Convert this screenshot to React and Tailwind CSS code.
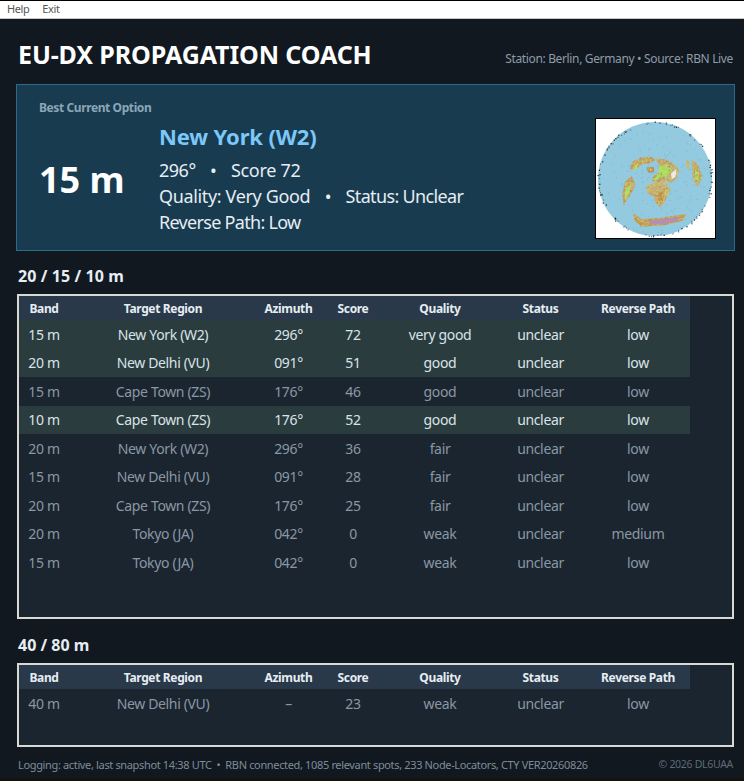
const rows1 = [
  ["15 m", "New York (W2)", "296°", "72", "very good", "unclear", "low", true],
  ["20 m", "New Delhi (VU)", "091°", "51", "good", "unclear", "low", true],
  ["15 m", "Cape Town (ZS)", "176°", "46", "good", "unclear", "low", false],
  ["10 m", "Cape Town (ZS)", "176°", "52", "good", "unclear", "low", true],
  ["20 m", "New York (W2)", "296°", "36", "fair", "unclear", "low", false],
  ["15 m", "New Delhi (VU)", "091°", "28", "fair", "unclear", "low", false],
  ["20 m", "Cape Town (ZS)", "176°", "25", "fair", "unclear", "low", false],
  ["20 m", "Tokyo (JA)", "042°", "0", "weak", "unclear", "medium", false],
  ["15 m", "Tokyo (JA)", "042°", "0", "weak", "unclear", "low", false],
];
const rows2 = [["40 m", "New Delhi (VU)", "–", "23", "weak", "unclear", "low", false]];
const headers = ["Band", "Target Region", "Azimuth", "Score", "Quality", "Status", "Reverse Path"];

// seeded random so the globe looks the same on every run
function rng(seed) {
  let s = seed;
  return () => {
    s = (s * 16807) % 2147483647;
    return s / 2147483647;
  };
}

function speckle(count, seed, minR, maxR) {
  const next = rng(seed);
  const out = [];
  for (let i = 0; i < count; i++) {
    const a = next() * Math.PI * 2;
    const r = minR + next() * (maxR - minR);
    out.push([210 + Math.cos(a) * r, 205 + Math.sin(a) * r]);
  }
  return out;
}

const land = [
  "M134 176 L144 152 L168 141 L198 138 L212 148 L194 158 L172 160 L152 176 Z",
  "M212 144 L242 146 L264 158 L282 176 L278 200 L260 216 L238 212 L214 218 L198 208 L212 190 L230 184 L222 166 Z",
  "M184 170 L206 168 L208 184 L190 186 Z",
  "M184 226 L206 218 L240 214 L258 238 L246 258 L238 278 L224 288 L212 278 L206 256 L186 246 Z",
  "M120 214 L140 196 L152 222 L140 246 L126 266 L116 286 L112 248 Z",
  "M320 148 L338 160 L352 198 L338 228 L324 206 Z",
  "M306 144 L313 154 L311 182 L303 164 Z",
  "M144 308 L170 326 L222 322 L304 310 L292 330 L240 343 L172 348 L150 332 Z",
];

function landTexture() {
  const next = rng(4242);
  const colors = ["#a6d86c", "#e2cf9a", "#b08048", "#bdf078", "#d4b070"];
  const out = [];
  for (let x = 111; x < 354; x += 4) {
    for (let y = 138; y < 350; y += 4) {
      if (next() < 0.5) out.push([x, y, colors[Math.floor(next() * colors.length)]]);
    }
  }
  return out;
}

function Globe() {
  return (
    <svg viewBox="33 25 357 357" className="w-[119px] h-[119px] shrink-0 bg-white outline outline-1 outline-black">
      <defs>
        <clipPath id="land">
          {land.map((d) => (
            <path key={d} d={d} />
          ))}
        </clipPath>
      </defs>
      <g className="blur-[0.3px]">
        <circle cx="210" cy="205" r="171" fill="#93cadf" />
        {speckle(170, 77, 20, 168).map(([x, y], i) => (
          <rect key={i} x={x} y={y} width="3" height="3" fill="#6d98a8" opacity="0.45" />
        ))}
        {speckle(110, 991, 166, 173).map(([x, y], i) => (
          <rect key={i} x={x} y={y} width="3.5" height="3.5" fill={i % 3 === 0 ? "#111" : "#5b7480"} />
        ))}
        {/* north america + eurasia band */}
        <path d={land[0]} fill="#c59a5c" />
        <path d={land[1]} fill="#c0a870" />
        <path d={land[2]} fill="#b98a5a" />
        <path d="M222 170 L244 160 L262 178 L246 196 L226 200 L212 210 L204 204 L222 190 Z" fill="#a8e05c" />
        <path d="M148 164 L158 160 L156 176 L148 178 Z" fill="#a8e05c" />
        {/* africa */}
        <path d={land[3]} fill="#c9ad72" />
        <path d="M222 244 L240 238 L236 262 L226 280 L218 262 Z" fill="#c98c46" />
        {/* south america */}
        <path d={land[4]} fill="#c49a62" />
        <path d="M122 232 L138 222 L134 246 L120 268 Z" fill="#a8e05c" />
        {/* right hand land */}
        <path d={land[5]} fill="#c7a86c" />
        <path d="M330 178 L342 186 L338 210 L330 200 Z" fill="#a8e05c" />
        <path d={land[6]} fill="#c7b070" />
        {/* antarctica */}
        <path d={land[7]} fill="#c9974f" />
        <g clipPath="url(#land)" opacity="0.65">
          {landTexture().map(([x, y, c], i) => (
            <rect key={i} x={x} y={y} width="4" height="4" fill={c} />
          ))}
        </g>
        <path d="M258 188 L274 176 L272 198 L260 206 Z" fill="#efe6ee" />
        <path d="M192 330 L232 324 L288 318 L276 332 L232 340 L196 342 Z" fill="#b48fb0" />
      </g>
    </svg>
  );
}

const gridCols = "grid grid-cols-[50px_188px_63px_66px_108px_93px_102px] w-[671px] pr-[1px]";

function BandTable({ rows, heightClass }) {
  return (
    <div className={`mx-[1px] border-2 border-[#d8d8d4] bg-[#1a2530] ${heightClass} overflow-hidden`}>
      <div className={`${gridCols} h-[24px] pt-[1px] bg-[#293949] items-center text-center text-[12px] font-bold text-[#e6edf3] tracking-[-0.35px]`}>
        {headers.map((h) => (
          <div key={h}>{h}</div>
        ))}
      </div>
      {rows.map((r, i) => (
        <div
          key={i}
          className={`${gridCols} h-[28.5px] items-center text-center text-[14px] tracking-[-0.35px] ${
            r[7] ? "bg-[#2a3c3e] text-[#dbe3e8]" : "text-[#8a97a3]"
          }`}
        >
          {r.slice(0, 7).map((c, j) => (
            <div key={j}>{c}</div>
          ))}
        </div>
      ))}
    </div>
  );
}

export default function App() {
  return (
    <div className="w-[744px] h-[781px] overflow-hidden bg-[#111820] font-['Noto_Sans',sans-serif] flex flex-col">
      <div className="h-[19px] shrink-0 bg-white border-t border-t-black border-b border-b-[#c8c8c8] flex items-center pl-[7px] gap-[13px] text-[11px] text-[#555] tracking-[-0.4px]">
        <span>Help</span>
        <span>Exit</span>
      </div>

      <div className="flex-1 pl-4 pr-[9px] flex flex-col">
        <div className="flex items-center justify-between h-[65px] pl-[2px] pr-[2px]">
          <h1 className="text-[25px] font-bold text-white tracking-[-0.1px] pt-[6px]">EU-DX PROPAGATION COACH</h1>
          <div className="text-[12px] text-[#8f9ca8] tracking-[-0.35px] pt-[14px]">Station: Berlin, Germany • Source: RBN Live</div>
        </div>

        <div className="h-[167px] w-[719px] border border-[#2a6a8a] bg-[#183b50] pl-[22px] pr-[19px] flex flex-col">
          <div className="pt-[14px] text-[12px] font-bold text-[#8ba6b6] tracking-[-0.4px]">Best Current Option</div>
          <div className="flex items-start">
            <div className="w-[120px] pt-[41px] text-[36px] font-bold text-white leading-[44px]">15 m</div>
            <div className="flex-1 pt-[4px] flex flex-col text-[18px] text-[#e6edf3] leading-[26px] tracking-[-0.5px]">
              <div className="text-[22px] font-bold text-[#7cc8f8] leading-[30px] tracking-[-0.15px] mb-[6px]">New York (W2)</div>
              <div className="flex items-center gap-[14.5px]">
                <span>296°</span>
                <span>•</span>
                <span className="tracking-[-0.3px]">Score 72</span>
              </div>
              <div className="flex items-center gap-[14.5px]">
                <span className="tracking-[-0.35px]">Quality: Very Good</span>
                <span>•</span>
                <span className="tracking-[-0.65px]">Status: Unclear</span>
              </div>
              <div className="tracking-[-0.7px]">Reverse Path: Low</div>
            </div>
            <div className="mt-[2px]">
              <Globe />
            </div>
          </div>
        </div>

        <h2 className="mt-[14px] h-[29px] pl-[2px] text-[16px] leading-[22px] font-bold text-[#e6edf3] tracking-[0.1px]">20 / 15 / 10 m</h2>
        <BandTable rows={rows1} heightClass="h-[325px]" />

        <h2 className="mt-[15px] h-[29px] pl-[2px] text-[16px] leading-[22px] font-bold text-[#e6edf3]">40 / 80 m</h2>
        <BandTable rows={rows2} heightClass="h-[84px]" />

        <div className="mt-[10px] flex items-center justify-between pl-[2px] pr-[2px] text-[11px] text-[#7f8c98]">
          <span className="tracking-[-0.35px] whitespace-pre">Logging: active, last snapshot 14:38 UTC  •  RBN connected, 1085 relevant spots, 233 Node-Locators, CTY VER20260826</span>
          <span className="text-[10.5px] tracking-[-0.3px] text-[#5f6b76]">© 2026 DL6UAA</span>
        </div>
      </div>
      <div className="h-[3px] shrink-0 bg-[#14140f]"></div>
    </div>
  );
}
